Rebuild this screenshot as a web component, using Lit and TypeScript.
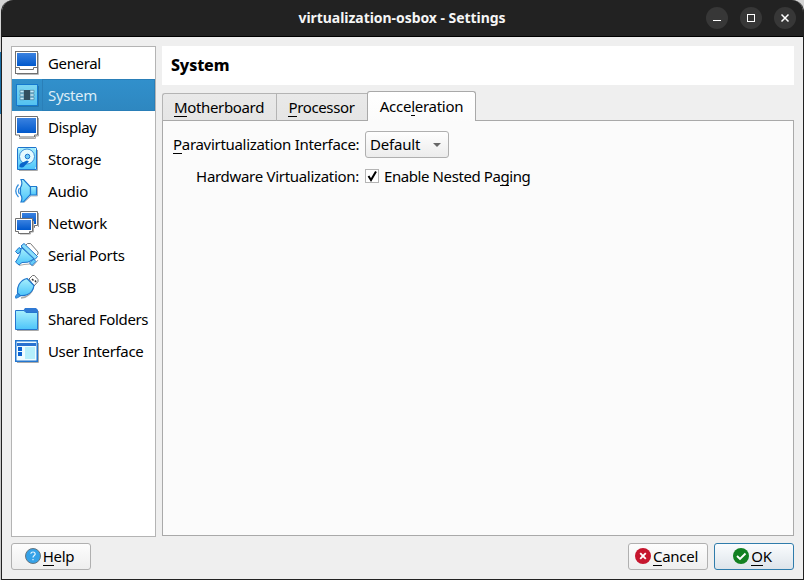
import { LitElement, html, svg, css } from "lit";
import { customElement, property } from "lit/decorators.js";

const defs = svg`<defs>
  <linearGradient id="screen" x1="0" y1="0" x2="0" y2="1"><stop offset="0" stop-color="#3a82e0"/><stop offset="1" stop-color="#0058cc"/></linearGradient>
  <linearGradient id="sky" x1="0" y1="0" x2="0" y2="1"><stop offset="0" stop-color="#a8f0fc"/><stop offset="1" stop-color="#4cc4fa"/></linearGradient>
</defs>`;

const icons: Record<string, unknown> = {
  general: svg`
    <path d="M2 23.500h21.500V2" stroke="#bbb" fill="none"/>
    <rect x=".5" y=".5" width="22" height="22" fill="#fff" stroke="#707070"/>
    <rect x="2" y="2" width="19" height="13" fill="url(#screen)"/>
    <path d="M1 16.500h3.500v2h14v-2h4" fill="none" stroke="#707070"/>`,
  system: svg`
    <path d="M3 23.500h20.500V3" stroke="#2474aa" fill="none"/>
    <rect x="1.500" y="1.500" width="21" height="21" fill="url(#sky)" stroke="#1479cf"/>
    <rect x="2" y="2" width="20" height="20" fill="#58bfea" opacity=".55"/>
    <path d="M5 7.300h4v2.400H5zM5 10.800h4v2.400H5zM5 14.300h4v2.400H5zM15 7.300h4v2.400h-4zM15 10.800h4v2.400h-4zM15 14.300h4v2.400h-4z" fill="#c4ecfb" stroke="#45718c" stroke-width=".6"/>
    <rect x="9" y="7" width="6" height="10" fill="#324e5f"/>`,
  display: svg`
    <g transform="translate(0 1)"><path d="M23.500 2v18h-3v2.500H4" stroke="#aaa" fill="none"/>
    <path d="M.5.5h22v18.500h-3v2h-15v-2h-4z" fill="#fff" stroke="#707070"/>
    <rect x="2" y="2" width="19" height="15" fill="url(#screen)"/></g>`,
  storage: svg`
    <path d="M4 23.500h18.500V3" stroke="#aaa" fill="none"/>
    <path d="M3 .5h18l.5 1v21h-19v-21z" fill="url(#sky)" stroke="#1d73cd"/>
    <circle cx="12" cy="9.500" r="7.500" fill="#e5fbff" stroke="#3e8fd8"/>
    <circle cx="12.500" cy="9.500" r="2.300" fill="#70cef5" stroke="#1d73cd"/>
    <path d="m12 13.500-6.500 3Q4 17.500 4.500 20l2 .5q2 .5 3.500-2l4-4z" fill="#0965cb"/>
    <path d="M4 2h1M20 2h1M20 21h1" stroke="#fff"/>`,
  audio: svg`
    <path d="m9 23.500 7-6.500h6.500V8" stroke="#bbb" fill="none"/>
    <path d="M3.500 5.500Q-2 12 3.500 18M4.500 9q-2 3 0 6" fill="none" stroke="#368fdd" stroke-width="1.300"/>
    <path d="M6 .5h2.500l7 7.500v7.500L8.500 23H6Q8 18.500 5.500 15.500v-7Q8 5 6 .5z" fill="url(#sky)" stroke="#1f7bd0" stroke-width="1.200"/>
    <path d="M15.500 7.500h6v8.500h-6z" fill="url(#sky)" stroke="#1f7bd0" stroke-width="1.200"/>`,
  network: svg`
    <path d="M23.500 2v14" stroke="#aaa"/>
    <path d="M5.500.5h17v14h-3v2h-11v-2h-3z" fill="#fff" stroke="#707070"/>
    <rect x="7" y="2" width="14" height="11" fill="url(#screen)"/>
    <path d="M18.500 10v11h-3v2H5" fill="none" stroke="#aaa"/>
    <path d="M.5 7.500h17v13h-3v2h-11v-2h-3z" fill="#fff" stroke="#707070"/>
    <rect x="2" y="9" width="14" height="10" fill="url(#screen)"/>`,
  serial: svg`
    <path d="m4 22.500 5-1 6-.5 3 2 5-6" fill="none" stroke="#aaa"/>
    <path d="M10.500 2.500 12.500.5h3l7.500 8.500v2l-3 3z" fill="#fff" stroke="#777"/>
    <path d="m.5 8.500 3.500-4 3 2-4 4.500zM14.500 20l4-4 2.500 2.500-4 4z" fill="#65ccf8" stroke="#1f75cc"/>
    <path d="M6.500 4.500Q5 13 2.500 16l-2 3 3.500 3 3-2.500q6 1 12-3.500z" fill="url(#sky)" stroke="#1f75cc"/>
    <path d="m6 3 3-2.500L22.500 13.500 20 16.500z" fill="#8ce0fb" stroke="#1f75cc"/>`,
  usb: svg`
    <path d="m14 4 3.500-3.500h2L23 4.500v2L19 11z" fill="#fff" stroke="#707070"/>
    <path d="m17 4 1.500 1.500M20 5.500l1 1.500" stroke="#333" stroke-width="1.500"/>
    <path d="M6 23q10-1 12.500-11" fill="none" stroke="#aaa" stroke-width="1.300"/>
    <path d="M12 3.500 19 10.500Q18 17 12.500 19.500 9 21 5 20.500L2.500 18Q2 13 4 9.500 7 4.500 12 3.500z" fill="url(#sky)" stroke="#1f75cc" stroke-width="1.200"/>
    <path d="m2.500 18.500 3 2.500L3 22.500.8 23.300 0 22z" fill="#3b9ce6" stroke="#1f75cc" stroke-width=".8"/>`,
  folders: svg`
    <g transform="translate(0 1)"><path d="M2 22.500h21.500V3" stroke="#aaa" fill="none"/>
    <path d="M8 3 10 0h11l2 2v4H8z" fill="#2f79d4"/>
    <path d="M.5 2.500H9l2 2h11.500v17H.5z" fill="url(#sky)" stroke="#2476cf"/></g>`,
  interface: svg`
    <g transform="translate(0 1)"><path d="M2 22.500h21.500V3" stroke="#aaa" fill="none"/>
    <rect x=".75" y=".75" width="21.500" height="20.500" fill="#effcff" stroke="#2476cf" stroke-width="1.500"/>
    <path d="M2 3h19v3H2z" fill="#2a72d0"/>
    <path d="M3 7h4v4H3zM3 12h4v4H3z" fill="#0b62d0"/>
    <rect x="10" y="7" width="10" height="12" fill="#b6effb"/></g>`,
};

@customElement("settings-icon")
export class SettingsIcon extends LitElement {
  @property() name = "general";
  static styles = css`
    :host { display: block; width: 25px; height: 25px; flex: none; margin-top: 4px; }
    svg { display: block; }
  `;
  render() {
    return html`<svg width="25" height="25" viewBox="0 0 25 25">${defs}${icons[this.name]}</svg>`;
  }
}

const categories = [
  { id: "general", label: "General" },
  { id: "system", label: "System" },
  { id: "display", label: "Display" },
  { id: "storage", label: "Storage" },
  { id: "audio", label: "Audio" },
  { id: "network", label: "Network" },
  { id: "serial", label: "Serial Ports" },
  { id: "usb", label: "USB" },
  { id: "folders", label: "Shared Folders" },
  { id: "interface", label: "User Interface" },
];

@customElement("app-root")
export class AppRoot extends LitElement {
  static styles = css`
    :host {
      display: block; width: 804px; height: 580px; overflow: hidden;
      background: linear-gradient(#d4d4d4 0 52px, #1c6fa5 52px 114px, #c8c8c8 114px);
      font: 15px/20px "Noto Sans", "Open Sans", sans-serif; color: #000;
    }
    * { box-sizing: border-box; }
    .backdrop { height: 580px; padding-left: 1px; }
    .window {
      width: 803px; height: 580px; background: #efefef; border: solid #222; border-width: 0 1px 1px;
      border-radius: 12px 12px 0 0; overflow: hidden; display: flex; flex-direction: column;
    }
    .titlebar {
      height: 37px; flex: none; background: #222; border-bottom: 1px solid #000; color: #f5f5f5;
      display: grid; grid-template-columns: 1fr auto 1fr; align-items: center; padding: 0 7px 0 6px;
    }
    .title { font-weight: 700; font-size: 14px; letter-spacing: -0.05px; }
    .controls { display: flex; gap: 12px; justify-content: flex-end; }
    .control { width: 22px; height: 22px; border-radius: 50%; background: #373737; }
    .control svg { display: block; }
    .content { flex: 1; display: grid; grid-template-columns: 145px 632px; column-gap: 6px; padding: 9px 9px 0; grid-template-rows: 491px 1fr; }
    .nav { border: 1px solid #b4b4b4; background: #fff; }
    .item { height: 32px; display: flex; align-items: flex-start; padding-left: 3px; }
    .item span { flex: 1; height: 32px; line-height: 33px; padding-left: 8px; white-space: nowrap; letter-spacing: -0.36px; }
    .item.storage span, .item.audio span, .item.network span { letter-spacing: -0.2px; }
    .item.serial span { letter-spacing: -0.28px; }
    .selected { background: linear-gradient(#3190cc, #2e87c0); color: #dcecf6; }
    .selected span { box-shadow: inset 0 0 0 1px #2a7fb8; margin-left: 2px; padding-left: 6px; }
    .main { display: flex; flex-direction: column; height: 490px; }
    .heading { height: 39px; flex: none; background: #fff; padding: 0 9px; font-weight: 800; font-size: 16px; letter-spacing: -0.15px; line-height: 39px; }
    .tabs { height: 36px; flex: none; display: flex; align-items: flex-end; position: relative; margin-bottom: -1px; }
    .tab { height: 28px; border: 1px solid #b4b4b4; border-right: 0; background: linear-gradient(#e9e9e9, #e5e5e5); border-bottom-color: #a9a9a9; text-align: center; line-height: 27px; white-space: nowrap; letter-spacing: -0.35px; }
    .first { width: 114px; border-top-left-radius: 3px; padding-right: 1px; }
    .second { width: 91px; padding-right: 1px; }
    .active { width: 109px; height: 30px; border: 1px solid #a9a9a9; border-bottom: 0; background: linear-gradient(#fff, #fbfbfb); border-radius: 3px 3px 0 0; line-height: 29px; letter-spacing: -0.27px; }
    .panel { flex: 1; border: 1px solid #a9a9a9; background: #fbfbfb; padding: 10px; }
    .row { display: grid; grid-template-columns: 186px auto; column-gap: 6px; justify-content: start; align-items: center; }
    .row span { margin-top: -2px; }
    .row > .label { text-align: right; white-space: nowrap; letter-spacing: -0.3px; }
    .select {
      width: 84px; height: 27px; border: 1px solid #afafaf; border-radius: 3px; background: linear-gradient(#fefefe, #ececec);
      display: flex; align-items: center; justify-content: space-between; padding: 0 7px 0 4px; letter-spacing: -0.2px;
    }
    .hardware { height: 22px; margin-top: 8px; }
    .check { display: flex; align-items: center; gap: 5px; white-space: nowrap; letter-spacing: -0.41px; }
    .box { width: 14px; height: 14px; border: 1px solid #b4b4b4; background: #fff; margin-top: -2px; }
    .box svg, .select svg { display: block; }
    u { text-decoration: none; position: relative; }
    u::after { content: ""; position: absolute; left: 0; right: 0; bottom: 0; height: 1px; background: currentColor; }
    .footer { grid-column: 1 / -1; display: flex; gap: 6px; padding-top: 6px; }
    .button {
      width: 80px; height: 27px; border: 1px solid #b0b0b0; border-radius: 3px; background: linear-gradient(#fdfdfd, #eee);
      display: flex; align-items: center; justify-content: center; gap: 2px; padding: 0 3px 1px 0; letter-spacing: -0.25px;
    }
    .button svg { flex: none; }
    .button span { margin-top: -1px; }
    .spacer { flex: 1; }
    .default { border-color: #2f7cab; background: linear-gradient(#fafcfe, #dde4ea); }
  `;

  render() {
    return html`<div class="backdrop"><div class="window">
      <div class="titlebar">
        <span></span><span class="title">virtualization-osbox - Settings</span>
        <div class="controls">
          <div class="control"><svg width="22" height="22"><path d="M7 13.500h8" stroke="#fff"/></svg></div>
          <div class="control"><svg width="22" height="22"><rect x="7.500" y="7.500" width="7" height="7" fill="none" stroke="#fff"/></svg></div>
          <div class="control"><svg width="22" height="22"><path d="m7.500 7.500 7 7m0-7-7 7" stroke="#fff" stroke-width="1.500"/></svg></div>
        </div>
      </div>
      <div class="content">
        <div class="nav">
          ${categories.map((c) => html`<div class="item ${c.id} ${c.id === "system" ? "selected" : ""}">
            <settings-icon name=${c.id}></settings-icon><span>${c.label}</span></div>`)}
        </div>
        <div class="main">
          <div class="heading">System</div>
          <div class="tabs">
            <div class="tab first"><u>M</u>otherboard</div>
            <div class="tab second"><u>P</u>rocessor</div>
            <div class="tab active">Acce<u>l</u>eration</div>
          </div>
          <div class="panel">
            <div class="row">
              <span class="label"><u>P</u>aravirtualization Interface:</span>
              <div class="select"><span>Default</span><svg width="8" height="4"><path d="M0 0h8L4 4z" fill="#666"/></svg></div>
            </div>
            <div class="row hardware">
              <span class="label">Hardware Virtualization:</span>
              <div class="check"><div class="box"><svg width="12" height="12"><path d="m2.500 6 2.500 4 5-8.500" fill="none" stroke="#000" stroke-width="2"/></svg></div><span>Enable Nested Pa<u>g</u>ing</span></div>
            </div>
          </div>
        </div>
        <div class="footer">
          <div class="button"><svg width="16" height="16"><circle cx="8" cy="8" r="7.500" fill="#35a2e8" stroke="#66757e"/><path d="M5.800 5.800Q6 4 8 4t2.200 1.900C10.200 7.500 8 7.500 8 9.500M8 11v1.300" fill="none" stroke="#e6f6ff" stroke-width="1.200"/></svg><span><u>H</u>elp</span></div>
          <div class="spacer"></div>
          <div class="button"><svg width="16" height="16"><circle cx="8" cy="8" r="8" fill="#c6162e"/><path d="m5.200 5.200 5.600 5.600m0-5.600-5.600 5.600" stroke="#fff" stroke-width="1.900"/></svg><span><u>C</u>ancel</span></div>
          <div class="button default"><svg width="16" height="16"><circle cx="8" cy="8" r="8" fill="#128122"/><path d="m4 8 3 3 5.500-5.500" fill="none" stroke="#fff" stroke-width="1.900"/></svg><span><u>O</u>K</span></div>
        </div>
      </div>
    </div></div>`;
  }
}
